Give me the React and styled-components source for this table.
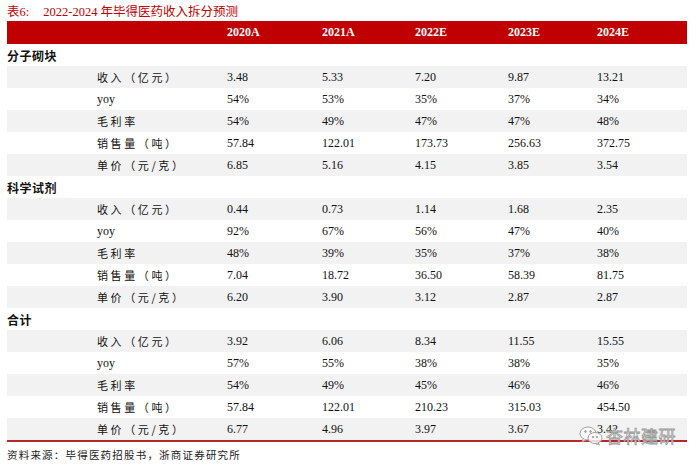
import React from 'react';
import styled, { createGlobalStyle } from 'styled-components';

const GlobalStyle = createGlobalStyle`
  body {
    margin: 0;
    background: #fff;
    font-family: "Liberation Serif", "Noto Sans CJK SC", serif;
  }
`;

const Page = styled.div`
  position: relative;
  width: 700px;
  height: 466px;
  padding-left: 7px;
  box-sizing: border-box;
  overflow: hidden;
`;

const Title = styled.div`
  height: 21px;
  display: flex;
  align-items: center;
  color: #c00000;
  font-size: 12.5px;
  gap: 14px;
`;

const Table = styled.div`
  width: 680px;
`;

const cols = '220px 95px 93px 93px 89px 1fr';

const HeadBar = styled.div`
  display: grid;
  grid-template-columns: ${cols};
  height: 23px;
  align-items: center;
  background: #c00000;
  color: #fff;
  font-weight: bold;
  font-size: 12px;
`;

const Section = styled.div`
  height: 22px;
  display: flex;
  align-items: center;
  font-family: "Noto Sans CJK SC", sans-serif;
  font-weight: bold;
  font-size: 12px;
  color: #111;
  letter-spacing: 0.5px;
`;

const Row = styled.div`
  display: grid;
  grid-template-columns: ${cols};
  height: 22px;
  align-items: center;
  background: ${p => (p.$shade ? '#f2f2f2' : '#fff')};
  font-size: 12px;
  color: #111;
`;

const Label = styled.div`
  padding-left: 90px;
  font-family: ${p => (p.$latin ? '"Liberation Serif", serif' : '"Noto Sans CJK SC", sans-serif')};
  font-size: ${p => (p.$latin ? '12px' : '11px')};
  letter-spacing: ${p => (p.$latin ? '0' : '2.6px')};
  white-space: nowrap;
`;

const Cell = styled.div`
  white-space: nowrap;
`;

const BottomRule = styled.div`
  height: 2px;
  background: #b8262b;
`;

const Source = styled.div`
  height: 24px;
  display: flex;
  align-items: center;
  font-family: "Noto Sans CJK SC", sans-serif;
  font-size: 10.5px;
  color: #222;
  letter-spacing: 1.2px;
`;

const Watermark = styled.div`
  position: absolute;
  left: 579px;
  top: 423px;
  display: flex;
  align-items: center;
  gap: 3px;
  pointer-events: none;
`;

const MarkText = styled.span`
  font-family: "Noto Sans CJK SC", sans-serif;
  font-size: 17px;
  color: rgba(255, 255, 255, 0.75);
  -webkit-text-stroke: 0.8px #9a9a9a;
  letter-spacing: 0.5px;
`;

const years = ['2020A', '2021A', '2022E', '2023E', '2024E'];

const labels = [
  { t: '收入（亿元）' },
  { t: 'yoy', latin: true },
  { t: '毛利率' },
  { t: '销售量（吨）' },
  { t: '单价（元/克）' },
];

const sections = [
  {
    name: '分子砌块',
    rows: [
      ['3.48', '5.33', '7.20', '9.87', '13.21'],
      ['54%', '53%', '35%', '37%', '34%'],
      ['54%', '49%', '47%', '47%', '48%'],
      ['57.84', '122.01', '173.73', '256.63', '372.75'],
      ['6.85', '5.16', '4.15', '3.85', '3.54'],
    ],
  },
  {
    name: '科学试剂',
    rows: [
      ['0.44', '0.73', '1.14', '1.68', '2.35'],
      ['92%', '67%', '56%', '47%', '40%'],
      ['48%', '39%', '35%', '37%', '38%'],
      ['7.04', '18.72', '36.50', '58.39', '81.75'],
      ['6.20', '3.90', '3.12', '2.87', '2.87'],
    ],
  },
  {
    name: '合计',
    rows: [
      ['3.92', '6.06', '8.34', '11.55', '15.55'],
      ['57%', '55%', '38%', '38%', '35%'],
      ['54%', '49%', '45%', '46%', '46%'],
      ['57.84', '122.01', '210.23', '315.03', '454.50'],
      ['6.77', '4.96', '3.97', '3.67', '3.42'],
    ],
  },
];

function WeChatIcon() {
  return (
    <svg width="24" height="20" viewBox="0 0 24 20" fill="none" stroke="#a0a0a0" strokeWidth="1">
      <ellipse cx="9" cy="7.5" rx="8" ry="6.5" fill="rgba(255,255,255,0.7)" />
      <path d="M4 13 L3 16 L7 14" fill="rgba(255,255,255,0.7)" />
      <ellipse cx="16" cy="12" rx="7" ry="5.5" fill="rgba(255,255,255,0.8)" />
      <path d="M19 17 L20.5 19 L16 17.4" />
      <circle cx="6.5" cy="5.5" r="0.9" fill="#a0a0a0" />
      <circle cx="11.5" cy="5.5" r="0.9" fill="#a0a0a0" />
      <circle cx="14" cy="11" r="0.7" fill="#a0a0a0" />
      <circle cx="18" cy="11" r="0.7" fill="#a0a0a0" />
    </svg>
  );
}

export default function App() {
  return (
    <>
      <GlobalStyle />
      <Page>
        <Title>
          <span>表6:</span>
          <span>2022-2024 年毕得医药收入拆分预测</span>
        </Title>
        <Table>
          <HeadBar>
            <div />
            {years.map(y => (
              <Cell key={y}>{y}</Cell>
            ))}
          </HeadBar>
          {sections.map(sec => (
            <div key={sec.name}>
              <Section>{sec.name}</Section>
              {sec.rows.map((vals, i) => (
                <Row key={i} $shade={i % 2 === 0}>
                  <Label $latin={labels[i].latin}>{labels[i].t}</Label>
                  {vals.map((v, j) => (
                    <Cell key={j}>{v}</Cell>
                  ))}
                </Row>
              ))}
            </div>
          ))}
          <BottomRule />
          <Source>资料来源：毕得医药招股书，浙商证券研究所</Source>
        </Table>
        <Watermark>
          <WeChatIcon />
          <MarkText>杏林建研</MarkText>
        </Watermark>
      </Page>
    </>
  );
}
